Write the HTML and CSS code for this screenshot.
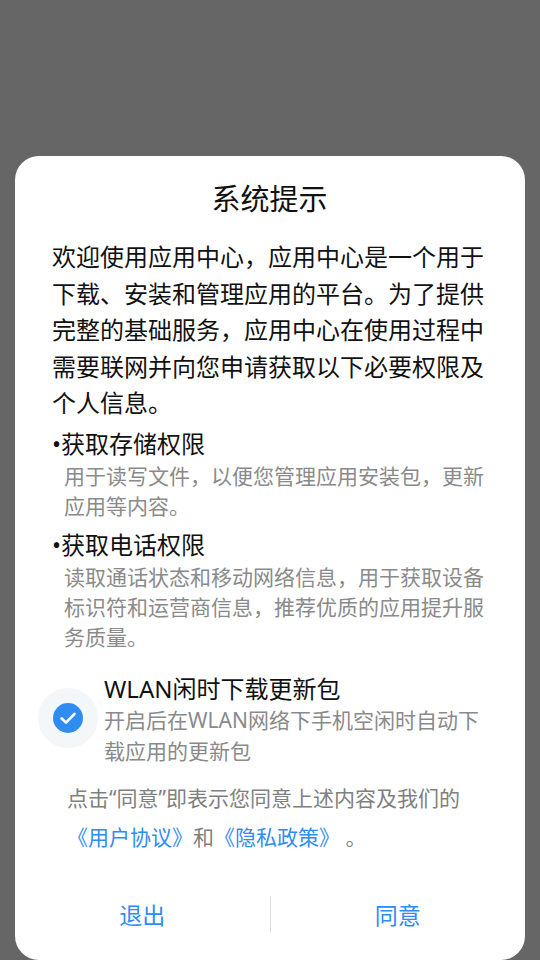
FILE: index.html
```html
<!DOCTYPE html>
<html lang="zh-CN">
<head>
    <meta charset="UTF-8">
    <meta name="viewport" content="width=device-width, initial-scale=1.0">
    <title>系统提示</title>
    <link rel="stylesheet" href="styles.css">
</head>
<body>
    <div class="dialog">
        <h2 class="dialog-title">系统提示</h2>
        <p class="intro">欢迎使用应用中心，应用中心是一个用于下载、安装和管理应用的平台。为了提供完整的基础服务，应用中心在使用过程中需要联网并向您申请获取以下必要权限及个人信息。</p>

        <div class="perm">
            <div class="perm-name">•获取存储权限</div>
            <div class="perm-desc">用于读写文件，以便您管理应用安装包，更新应用等内容。</div>
        </div>
        <div class="perm">
            <div class="perm-name">•获取电话权限</div>
            <div class="perm-desc">读取通话状态和移动网络信息，用于获取设备标识符和运营商信息，推荐优质的应用提升服务质量。</div>
        </div>

        <div class="wlan-row">
            <div class="check-wrap">
                <svg class="check" width="30" height="30" viewBox="0 0 30 30">
                    <circle cx="15" cy="15" r="15" fill="#2f8cf3"/>
                    <path d="M8.5 15.3 L13 19.6 L21.5 10.8" fill="none" stroke="#fff" stroke-width="2.6" stroke-linecap="round" stroke-linejoin="round"/>
                </svg>
            </div>
            <div class="wlan-text">
                <div class="wlan-title">WLAN闲时下载更新包</div>
                <div class="wlan-desc">开启后在WLAN网络下手机空闲时自动下载应用的更新包</div>
            </div>
        </div>

        <p class="agree-note">点击“同意”即表示您同意上述内容及我们的<a href="#" class="link">《用户协议》</a>和<a href="#" class="link">《隐私政策》</a> 。</p>

        <div class="actions">
            <button type="button" class="action">退出</button>
            <span class="divider"></span>
            <button type="button" class="action">同意</button>
        </div>
    </div>
</body>
</html>
```

FILE: styles.css
```css
html, body {
    height: 100%;
}
body {
    margin: 0;
    background-color: #666666;
    font-family: "Noto Sans", "Noto Sans CJK SC", sans-serif;
    overflow: hidden;
}
.dialog {
    box-sizing: border-box;
    margin: 156px 15px 0;
    height: 804px;
    padding: 23px 38px 0 37px;
    background: #fff;
    border-radius: 24px;
}
.dialog-title {
    margin: 0;
    font-size: 29px;
    font-weight: normal;
    line-height: 40px;
    text-align: center;
    color: #111;
}
.intro {
    margin: 20px 0 0;
    font-size: 24px;
    line-height: 36.5px;
    color: #111;
}
.perm {
    margin-top: 5px;
}
.perm + .perm {
    margin-top: 6px;
}
.perm-name {
    font-size: 24px;
    line-height: 34px;
    color: #111;
}
.perm-desc {
    padding-left: 12px;
    font-size: 21px;
    line-height: 30.5px;
    color: #8a8a8a;
}
.perm + .perm .perm-desc {
    line-height: 30px;
}
.wlan-row {
    display: flex;
    align-items: center;
    margin-top: 21px;
}
.check-wrap {
    flex: none;
    display: flex;
    align-items: center;
    justify-content: center;
    width: 60px;
    height: 60px;
    margin: -4px 6px 0 -14px;
    border-radius: 50%;
    background: #f4f7f9;
}
.check {
    display: block;
}
.wlan-text {
    flex: 1;
}
.wlan-title {
    font-size: 24px;
    line-height: 32px;
    color: #111;
}
.wlan-desc {
    font-size: 21px;
    line-height: 31px;
    color: #8a8a8a;
}
.agree-note {
    margin: 12px 0 0;
    padding-left: 15px;
    font-size: 21px;
    line-height: 39px;
    color: #808080;
}
.link {
    color: #2f8cf3;
    text-decoration: none;
}
.actions {
    display: flex;
    align-items: center;
    height: 54px;
    margin: 30px -38px 0 -37px;
}
.action {
    flex: 1;
    height: 100%;
    padding: 0;
    border: none;
    background: none;
    font-family: inherit;
    font-size: 23px;
    color: #2f8cf3;
    cursor: pointer;
}
.divider {
    width: 1px;
    height: 36px;
    background: #dcdcdc;
}
```
